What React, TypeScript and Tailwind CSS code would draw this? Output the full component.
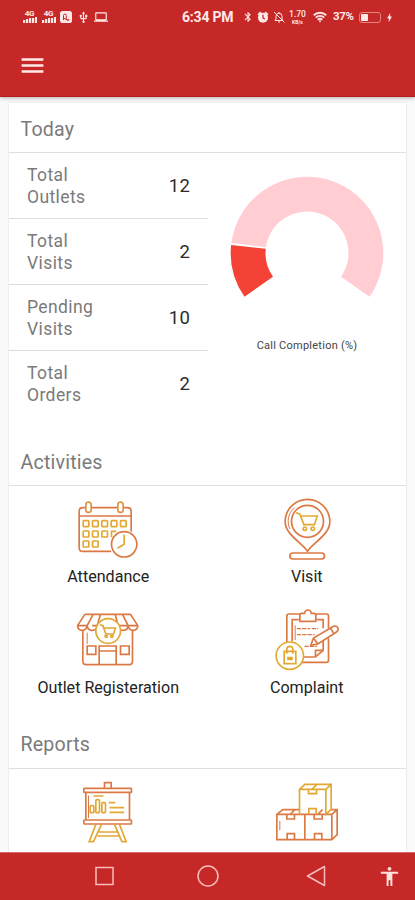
import React from 'react';
import { MdMenu, MdBluetooth, MdUsb, MdLaptop, MdBolt, MdAccessibility } from 'react-icons/md';

interface Stat {
  label: string[];
  value: number;
}

interface Tile {
  label: string;
  icon: React.ReactNode;
}

const stats: Stat[] = [
  { label: ['Total', 'Outlets'], value: 12 },
  { label: ['Total', 'Visits'], value: 2 },
  { label: ['Pending', 'Visits'], value: 10 },
  { label: ['Total', 'Orders'], value: 2 }
];

const DEEP = '#dc7844';
const AMBER = '#e2a833';

const CalendarIcon = () => (
  <svg viewBox="49.5 24 192 192" className="size-16" fill="none" stroke={DEEP} strokeWidth="5">
    <path d="M155 184H70q-11 0-11-11V64q0-11 11-11h9M97 53h78M193 53h11q11 0 11 11v61M59 78h156" />
    <rect x="79" y="36" width="16" height="31" rx="8" stroke="#df913f" />
    <rect x="175" y="36" width="16" height="31" rx="8" stroke="#df913f" />
    <g stroke={AMBER}>
      {[71, 99, 127, 155, 183].map(x => <rect key={x} x={x} y="92" width="17" height="18" rx="2" />)}
      {[71, 99, 127].map(x => <rect key={x} x={x} y="123" width="17" height="18" rx="2" />)}
      <path d="M156 142v-18h14" />
      {[71, 99].map(x => <rect key={x} x={x} y="153" width="17" height="18" rx="2" />)}
    </g>
    <circle cx="194" cy="163" r="38" fill="#fff" />
    <path d="M194 134v29l-20 12" stroke={AMBER} />
  </svg>
);

const PinIcon = () => (
  <svg viewBox="46.5 24 192 192" className="size-16" fill="none" stroke={DEEP} strokeWidth="5">
    <path d="M144 184C128 158 77 134 77 95a67 67 0 0 1 134 0c0 39-51 63-67 89z" />
    <circle cx="144" cy="94" r="48" />
    <path d="M91 117c-10-22-5-48 14-64" strokeWidth="3" />
    <rect x="91" y="189" width="104" height="18" rx="9" />
    <g stroke={AMBER}>
      <path d="M109 68l12 4 12 32h32l8-26h-48" />
      <circle cx="136" cy="116" r="5" />
      <circle cx="160" cy="116" r="5" />
    </g>
  </svg>
);

const StoreIcon = () => (
  <svg viewBox="49.5 24 192 192" className="size-16" fill="none" stroke={DEEP} strokeWidth="5">
    <path d="M70 92v92q0 10 10 10h129q10 0 10-10V92" />
    <path d="M76 43h137l22 34q-1 14-14 14t-15-14q-1 14-15 14t-15-14M76 43L54 77q1 14 14 14t15-14q1 14 15 14t15-14M83 77l18-34M113 77l10-34M206 77l-17-34M176 77l-9-34M83 77H54M98 77h15M176 77h59" />
    <path d="M83 98v34" strokeWidth="3" />
    <path d="M83 138h26v25H83zM183 138h26v25h-26zM119 194v-56h51v56M119 153h51" />
    <circle cx="146" cy="93" r="37" fill="#fff" stroke={AMBER} />
    <g stroke={AMBER}>
      <path d="M121 74l9 3 9 25h23l6-18h-34" />
      <circle cx="140" cy="109" r="3.5" />
      <circle cx="157" cy="109" r="3.5" />
    </g>
  </svg>
);

const ClipboardIcon = () => (
  <svg viewBox="46.5 24 192 192" className="size-16" fill="none" stroke={DEEP} strokeWidth="5">
    <path d="M82 130V48q0-6 6-6h33M169 42h32q6 0 6 6v38M207 115v66q0 6-6 6h-77" />
    <path d="M98 124V59h20M171 59h20v26M191 122v29l-23 20h-38M168 171v-20h23" />
    <path d="M121 64V45q0-5 6-5h8a10 10 0 0 1 20 0h8q6 0 6 5v19z" />
    <path d="M107 76v44" strokeWidth="3" />
    <path d="M112 86h40M157 86h19M112 104h53M135 139h38" strokeWidth="4" strokeDasharray="13 3" />
    <path d="M154 136l8-22 60-35q9-3 13 4 3 8-4 13l-56 36zM162 114l13 18M213 84l10 17" fill="#fff" />
    <circle cx="91" cy="167" r="41" fill="#fff" stroke={AMBER} />
    <path d="M74 154h35v37H74zM82 161v-13q0-9 9-9t9 9v13M83 173h17M83 178h17" stroke={AMBER} />
  </svg>
);

const EaselIcon = () => (
  <svg viewBox="49.5 45 192 192" className="size-16" fill="none" stroke={DEEP} strokeWidth="5">
    <path d="M135 70V53h20v17" />
    <rect x="73" y="70" width="143" height="12" rx="2" />
    <rect x="73" y="165" width="143" height="12" rx="2" />
    <path d="M79 82v83M210 82v83" />
    <path d="M87 92v67" strokeWidth="3" />
    <g stroke={AMBER}>
      <path d="M102 93h30M148 113h19M150 128h44M150 142h44" />
      <rect x="92" y="122" width="11" height="21" rx="3" />
      <rect x="109" y="104" width="11" height="39" rx="3" />
      <rect x="127" y="113" width="11" height="30" rx="3" />
      <path d="M109 178l-20 52h13l24-52M165 178l22 52h13l-20-52M118 201h56M114 213h63" />
    </g>
  </svg>
);

const BoxesIcon = () => (
  <svg viewBox="46.5 45 192 192" className="size-16" fill="none" stroke={DEEP} strokeWidth="5">
    <path d="M119 134H70l-18 14v76h165l16-15v-75h-19M52 148h165l16-14M217 148v76M136 148v76" />
    <path d="M82 148v14h23v-14M164 148v14h24v-14M83 224v-18h22v18M165 224v-18h22v18M93 147l13-13M176 147l13-13" />
    <path d="M61 168v27" strokeWidth="3" />
    <g stroke={AMBER}>
      <path d="M120 148V73l16-15h79v75l-16 15V73h-79M199 73l16-15M147 73v13h24V73M148 148v-17h22v17M158 72l15-14" />
    </g>
  </svg>
);

const activities: Tile[] = [
  { label: 'Attendance', icon: <CalendarIcon /> },
  { label: 'Visit', icon: <PinIcon /> },
  { label: 'Outlet Registeration', icon: <StoreIcon /> },
  { label: 'Complaint', icon: <ClipboardIcon /> }
];

const Signal = () => (
  <div className="flex w-[15px] flex-col items-center text-[8px] font-bold leading-[6px] tracking-[-0.3px]">
    <span>4G</span>
    <svg viewBox="0 0 14 6" className="h-1.5 w-3.5" fill="currentColor">
      <path d="M0 3h2.2v3H0zM3 2h2.2v4H3zM6 1h2.2v5H6zM9 1h2.2v5H9zM12 0h2v6h-2z" />
    </svg>
  </div>
);

const AlarmIcon = () => (
  <svg viewBox="0 0 13 13" className="ml-[3px] size-[12px]" fill="currentColor">
    <path d="M.6 3.4L3.4.6l1.4 1.2-3 2.8zM12.4 3.4L9.6.6 8.2 1.8l3 2.8z" />
    <circle cx="6.5" cy="7.2" r="5.4" />
    <path d="M6.5 4v3.4l2 1.2" fill="none" stroke="#c62828" strokeWidth="1.4" />
  </svg>
);

const MutedBellIcon = () => (
  <svg viewBox="0 0 12 12" className="ml-[4px] size-3" fill="none" stroke="currentColor">
    <path d="M2 9.5h8L9 8V5.2a3 3 0 0 0-6 0V8zM6 2.2V1M5 11h2M1 1l10.5 10.5" />
  </svg>
);

const WifiIcon = () => (
  <svg viewBox="0 0 14 12" className="ml-[6px] h-3 w-3.5" fill="none" stroke="currentColor" strokeWidth="1.9">
    <path d="M.8 4.2a9 9 0 0 1 12.4 0M2.8 6.6a6 6 0 0 1 8.4 0M4.8 8.8a3.2 3.2 0 0 1 4.4 0" />
    <path d="M5.6 9.6h2.8L7 11.4z" fill="currentColor" stroke="none" />
  </svg>
);

const StatusBar = () => (
  <div className="flex h-[34px] items-center pl-[22px] text-[#ffe9e6]">
    <Signal />
    <div className="ml-1"><Signal /></div>
    <svg viewBox="0 0 12 12" className="ml-1 size-3">
      <rect width="12" height="12" rx="2.5" fill="currentColor" />
      <path d="M3.5 9V4.5a1.4 1.4 0 0 1 2.8 0V8a1.3 1.3 0 0 0 2.6 0M3.5 7l5 2.5" fill="none" stroke="#c62828" />
    </svg>
    <MdUsb className="ml-[5px] size-[13px]" />
    <MdLaptop className="ml-[4px] size-[14px]" />
    <span className="ml-[74px] w-[56px] whitespace-nowrap text-[14px] font-bold tracking-[-0.2px]">6:34 PM</span>
    <MdBluetooth className="ml-[4px] size-3" stroke="currentColor" />
    <AlarmIcon />
    <MutedBellIcon />
    <div className="ml-[3px] flex w-[19px] flex-col items-center text-[8.5px] font-medium leading-[10px]">
      <span>1.70</span>
      <span className="text-[5px] font-bold leading-[6px]">KB/s</span>
    </div>
    <WifiIcon />
    <span className="ml-[6px] w-[22px] whitespace-nowrap text-[11.5px] font-bold tracking-[-0.4px]">37%</span>
    <div className="ml-[4px] h-[11px] w-[22px] rounded-[3px] border border-[#e08580] p-px">
      <div className="h-full w-[7px] rounded-[1px] bg-[#ffe9e6]" />
    </div>
    <MdBolt className="ml-[3px] size-[11px]" />
  </div>
);

const CX = 77;
const CY = 77;
const slice = (from: number, to: number) => {
  const at = (deg: number, r: number) => {
    const a = (deg * Math.PI) / 180;
    return `${CX + r * Math.cos(a)} ${CY + r * Math.sin(a)}`;
  };
  const large = to - from > 180 ? 1 : 0;
  return `M${at(from, 76.3)}A76.3 76.3 0 ${large} 1 ${at(to, 76.3)}L${at(to, 41.5)}A41.5 41.5 0 ${large} 0 ${at(from, 41.5)}Z`;
};

const CompletionChart = () => (
  <div className="flex flex-1 flex-col items-center pt-[23px]">
    <svg viewBox="0 0 154 124" className="h-[124px] w-[154px]">
      <path d={slice(145, 186)} fill="#f44336" />
      <path d={slice(187.8, 395)} fill="#ffcdd2" />
    </svg>
    <p className="mt-[38px] text-[11px] leading-4 tracking-[0.25px] text-[#444]">Call Completion (%)</p>
  </div>
);

const SectionTitle = ({ children, className = '' }: { children: React.ReactNode; className?: string }) => (
  <h2 className={`border-b border-[#e0e0e0] pl-[11.5px] text-[19.6px] tracking-[0.2px] text-[#7a7a7a] ${className}`}>{children}</h2>
);

const App: React.FC = () => {
  return (
    <div className="flex h-[900px] w-[415px] flex-col overflow-hidden bg-[#fafafa] font-[Roboto,sans-serif]">
      <header className="z-10 h-[97px] shrink-0 border-b border-[#b71c1c] bg-[#c62828] shadow-[0_1px_4px_rgba(0,0,0,0.3)]">
        <StatusBar />
        <button className="ml-[18px] mt-[17px] block text-[#ffe9e6]" aria-label="Menu">
          <MdMenu className="size-[29px]" />
        </button>
      </header>

      <main className="min-h-0 flex-1 overflow-hidden px-[9px] pt-[6px]">
        <div className="h-[760px] bg-white shadow-[0_0_2px_rgba(0,0,0,0.15)]">
          <SectionTitle className="h-[50px] leading-[54px]">Today</SectionTitle>
          <div className="flex">
            <div className="w-[199px]">
              {stats.map((s, i) => (
                <div
                  key={i}
                  className="flex h-[66px] items-center justify-between border-b border-[#dcdcdc] px-[18px] pt-px last:border-b-0 last:pt-0"
                >
                  <p className="text-[17.5px] leading-[22px] tracking-[0.4px] text-[#7a7a7a]">
                    {s.label[0]}
                    <br />
                    {s.label[1]}
                  </p>
                  <span className="pt-px text-[18.5px] tracking-[0.2px] text-[#2b2b2b]">{s.value}</span>
                </div>
              ))}
            </div>
            <CompletionChart />
          </div>

          <SectionTitle className="mt-[19px] h-[50px] leading-[53px]">Activities</SectionTitle>
          <div className="grid grid-cols-2 pt-3">
            {activities.map((t, i) => (
              <button key={t.label} className="flex h-[110px] flex-col items-center">
                {t.icon}
                <span className={`text-[16.1px] leading-[22px] text-[#222] ${i < 2 ? 'mt-[4px]' : 'mt-[5px]'}`}>{t.label}</span>
              </button>
            ))}
          </div>

          <SectionTitle className="h-[51px] leading-[54px]">Reports</SectionTitle>
          <div className="grid grid-cols-2 pt-[11px]">
            <div className="flex justify-center"><EaselIcon /></div>
            <div className="flex justify-center"><BoxesIcon /></div>
          </div>
        </div>
      </main>

      <nav className="relative z-10 h-12 shrink-0 border-t border-[#d36b6b] bg-[#c62828]">
        <svg viewBox="0 852 415 48" className="-mt-px h-12 w-[415px]" fill="none" stroke="#f7bdb9" strokeWidth="1.5">
          <rect x="96" y="867.5" width="17" height="17" />
          <circle cx="208" cy="876" r="10" />
          <path d="M324.5 866.5v19l-17-9.5z" strokeLinejoin="round" />
        </svg>
        <MdAccessibility className="absolute left-[378px] top-[12px] size-[23px] text-[#ffe0dc]" stroke="currentColor" />
      </nav>
    </div>
  );
};

export default App;
